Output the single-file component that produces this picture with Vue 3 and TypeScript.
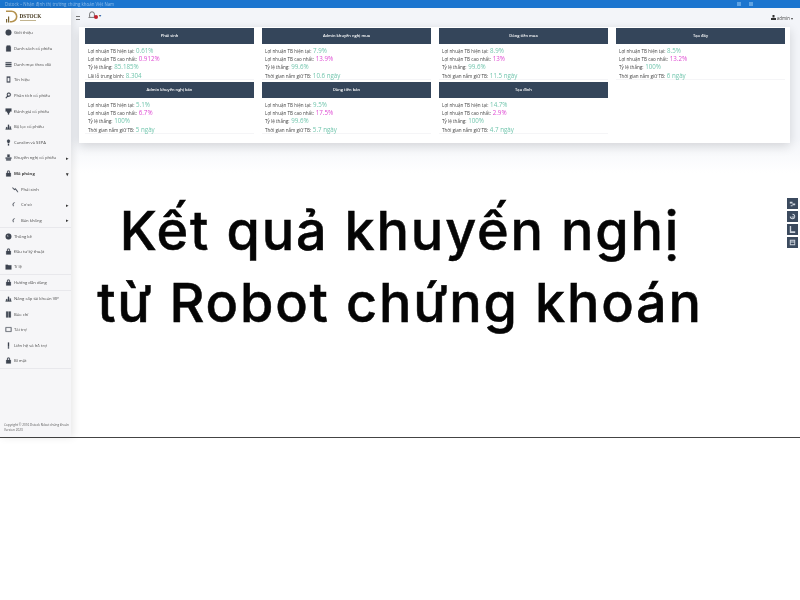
<script setup lang="ts">
interface Row { label: string; value: string; hot?: boolean }
interface Card { title: string; rows: Row[] }
const ic: Record<string, string> = {
  info: 'M6 1a5 5 0 1 0 0 10A5 5 0 0 0 6 1z',
  doc: 'M3 1h6v1.5h1V11H2V2.5h1z',
  list: 'M1 2h10v2H1zM1 5h10v2H1zM1 8h10v2H1z',
  clip: 'M3 1h6v10H3zM4.2 3v6.5h3.6V3z',
  search: 'M6.5 1a3.5 3.5 0 1 1 0 7 3.5 3.5 0 0 1 0-7zM6.5 2.5a2 2 0 1 0 0 4 2 2 0 0 0 0-4zM3.5 7l1.2 1.2L2 11 1 10z',
  rate: 'M1 1h10v5H8.5v2H7v3H5V8H3.5V6H1z',
  chart: 'M1 10h10v1H1zM2 7h2v3H2zM5 3h2v7H5zM8 6h2v4H8z',
  bulb: 'M6 1a2.6 2.6 0 0 1 1.6 4.6V7H4.4V5.6A2.6 2.6 0 0 1 6 1zM5 8h2v3H5z',
  user: 'M4 1h4v4H4zM1 6h10v2H1zM2 9h8v2H2z',
  lock: 'M3.5 5V3.5a2.5 2.5 0 0 1 5 0V5H10v6H2V5zM4.8 5h2.4V3.5a1.2 1.2 0 0 0-2.4 0z',
  globe: 'M6 1a5 5 0 1 0 0 10A5 5 0 0 0 6 1zM3 3l3 2-1 2z',
  folder: 'M1 3h4l1 1h5v7H1z',
  book: 'M2 1h3v10H2zM6 1h4v10H6z',
  card: 'M1 2h10v8H1zM2 3v6h8V3z',
  alert: 'M5 1h2v7H5zM5 9h2v2H5z',
  trend: 'M1 2l3 3 2-1 4 5v2L6 6 4 7 1 4z',
  arc: 'M2 9a5 5 0 0 1 2-7l.6.8A4 4 0 0 0 3 8.5z',
}
const menu = [
  { t: 'Giới thiệu', i: 'info' }, { t: 'Danh sách cổ phiếu', i: 'doc' },
  { t: 'Danh mục theo dõi', i: 'list' }, { t: 'Tín hiệu', i: 'clip' },
  { t: 'Phân tích cổ phiếu', i: 'search' }, { t: 'Đánh giá cổ phiếu', i: 'rate' },
  { t: 'Bộ lọc cổ phiếu', i: 'chart' }, { t: 'Canslim và SEPA', i: 'bulb' },
  { t: 'Khuyến nghị cổ phiếu', i: 'user', arrow: '▸' }, { t: 'Mô phỏng', i: 'lock', arrow: '▾', bold: true },
  { t: 'Phái sinh', i: 'trend', sub: true }, { t: 'Cơ sở', i: 'arc', sub: true, arrow: '▸' },
  { t: 'Bán khống', i: 'arc', sub: true, arrow: '▸', line: true }, { t: 'Thống kê', i: 'globe' },
  { t: 'Đầu tư kỹ thuật', i: 'lock' }, { t: 'Tỉ lệ', i: 'folder', line: true },
  { t: 'Hướng dẫn dùng', i: 'lock', line: true }, { t: 'Nâng cấp tài khoản VIP', i: 'chart' },
  { t: 'Báo chí', i: 'book' }, { t: 'Tài trợ', i: 'card' },
  { t: 'Liên hệ và hỗ trợ', i: 'alert' }, { t: 'Bí mật', i: 'lock', line: true },
]
function mk(title: string, a: string, b: string, c: string, d: string, last = 'Thời gian nắm giữ TB:'): Card {
  return { title, rows: [
    { label: 'Lợi nhuận TB hiện tại:', value: a },
    { label: 'Lợi nhuận TB cao nhất:', value: b, hot: true },
    { label: 'Tỷ lệ thắng:', value: c },
    { label: last, value: d },
  ] }
}
const columns: Card[][] = [
  [mk('Phái sinh', '0.61%', '0.912%', '85.185%', '8.304', 'Lãi lỗ trung bình:'), mk('Admin khuyến nghị bán', '5.1%', '6.7%', '100%', '5 ngày')],
  [mk('Admin khuyến nghị mua', '7.9%', '13.9%', '99.6%', '10.6 ngày'), mk('Dòng tiền bán', '9.5%', '17.5%', '99.6%', '5.7 ngày')],
  [mk('Dòng tiền mua', '8.9%', '13%', '99.6%', '11.5 ngày'), mk('Tạo đỉnh', '14.7%', '2.9%', '100%', '4.7 ngày')],
  [mk('Tạo đáy', '8.5%', '13.2%', '100%', '6 ngày')],
]
const floatIcons = [
  'M2 3h3v2H2zM5 5h3v2H5zM3 7h2v1H3z',
  'M5 2a3 3 0 1 1-3 3h1a2 2 0 1 0 2-2zM4 5h3v1H4z',
  'M2 1h1.5v6H8v2H2z',
  'M2 2h6v6H2zM3 3v1h4V3zM3 5v2h4V5z',
]
</script>

<template>
  <div class="page">
    <div class="shot">
      <div class="topbar">
        <span class="toptext">Dstock – Nhận định thị trường chứng khoán Việt Nam</span>
        <span class="topdots"><i></i><i></i></span>
      </div>
      <div class="body">
        <aside class="side">
          <div class="logo">
            <svg width="13" height="13" viewBox="0 0 13 13"><path d="M1 .5h5.5a6 6 0 0 1 0 12H4.8v-1.6h1.7a4.4 4.4 0 0 0 0-8.8H1z" fill="#b4924f"/><path d="M1 9h1.2v3.5H1zM3 6.5h1.2v6H3z" fill="#7a6434"/></svg>
            <div class="brand"><b>DSTOCK</b><i></i></div>
          </div>
          <nav class="menu">
            <div v-for="m in menu" :key="m.t" class="item" :class="{ sub: m.sub, line: m.line, bold: m.bold }">
              <svg class="ico" viewBox="0 0 12 12"><path :d="ic[m.i]" fill="#3d4450" fill-rule="evenodd" stroke="#3d4450" stroke-width="0.3"/></svg>
              <span class="lbl">{{ m.t }}</span>
              <span v-if="m.arrow" class="arrow">{{ m.arrow }}</span>
            </div>
          </nav>
          <div class="copy">Copyright © 2016 Dstock Robot chứng khoán<br>Version 2023</div>
        </aside>
        <main class="main">
          <header class="head">
            <div class="bell">
              <svg width="8" height="8" viewBox="0 0 10 10"><path d="M5 1a3 3 0 0 1 3 3v3l1 1H1l1-1V4a3 3 0 0 1 3-3z" fill="none" stroke="#555" stroke-width="1"/></svg>
              <i class="dot"></i><span class="caret">▾</span>
            </div>
            <div class="burger"></div>
            <div class="account"><svg width="5" height="5" viewBox="0 0 10 10"><path d="M3 0h4v5H3zM0 6h10v4H0z" fill="#333"/></svg> admin ▾</div>
          </header>
          <section class="panel">
            <div v-for="(col, i) in columns" :key="i" class="col">
              <article v-for="c in col" :key="c.title" class="card">
                <h3>{{ c.title }}</h3>
                <div class="rows">
                  <p v-for="r in c.rows" :key="r.label">{{ r.label }} <span :class="r.hot ? 'hot' : 'ok'">{{ r.value }}</span></p>
                </div>
              </article>
            </div>
          </section>
        </main>
      </div>
    </div>
    <div class="floats">
      <span v-for="d in floatIcons" :key="d" class="fbtn"><svg width="9" height="9" viewBox="0 0 10 10"><path :d="d" fill="#cfd5de" fill-rule="evenodd"/></svg></span>
    </div>
    <h1 class="title">Kết quả khuyến nghị<br>từ Robot chứng khoán</h1>
  </div>
</template>

<style>
html, body { background: #fff; }
</style>
<style scoped>
.page { position: relative; width: 800px; height: 600px; overflow: hidden; background: #fff; font-family: "Open Sans", "Noto Sans", sans-serif; }
.shot { height: 438px; display: flex; flex-direction: column; border-bottom: 1px solid #444; box-sizing: border-box; }
.topbar { height: 8px; background: #1b75cf; flex: none; padding: 0 47px 0 5px; overflow: hidden; display: flex; justify-content: space-between; align-items: center; }
.toptext { font-size: 4.4px; line-height: 8px; color: #8fbdea; filter: blur(.35px); }
.topdots { display: flex; gap: 8px; }
.topdots i { width: 4px; height: 4px; background: #5fa3e3; filter: blur(.5px); }
.body { flex: 1; display: flex; min-height: 0; }
.side { width: 71px; flex: none; background: #f6f6f8; box-shadow: 2px 0 8px rgba(0,0,0,.1); display: flex; flex-direction: column; z-index: 1; }
.logo { height: 17px; display: flex; align-items: center; gap: 1.5px; padding-left: 5px; background: #fff; filter: blur(.25px); }
.brand { display: flex; flex-direction: column; }
.brand b { font-size: 5.2px; line-height: 7px; color: #3f3218; font-family: "Liberation Serif", serif; letter-spacing: 0; }
.brand i { height: 1px; width: 16px; background: #c2b48f; }
.menu { flex: 1; }
.item { height: 15.65px; box-sizing: border-box; display: flex; align-items: center; padding-left: 5px; font-size: 4.2px; color: #4a4a4a; filter: blur(.3px); }
.item.line { border-bottom: 1px solid #e8e8ec; }
.item.sub { padding-left: 12px; }
.item.bold { font-weight: 700; color: #444; }
.ico { width: 7px; height: 7px; flex: none; margin-right: 2px; }
.lbl { flex: 1; white-space: nowrap; overflow: hidden; }
.arrow { font-size: 4.5px; margin-right: 2px; color: #333; }
.copy { font-size: 3.1px; line-height: 5px; color: #555; padding: 0 4px 4px; white-space: nowrap; filter: blur(.25px); }
.main { flex: 1; min-width: 0; padding: 0 10px 0 8px; background: linear-gradient(#f3f5f9 0, #f3f5f9 130px, #fff 165px); background-color: #fff; }
.head { height: 19px; position: relative; display: flex; align-items: center; justify-content: flex-end; }
.bell { position: absolute; left: 9px; top: 3px; display: flex; align-items: center; }
.dot { width: 4px; height: 4px; border-radius: 50%; background: #c21f2c; margin-left: -2px; margin-top: 4px; }
.caret { font-size: 4px; color: #444; margin-left: 1px; }
.burger { position: absolute; left: -3px; top: 8px; width: 4px; height: 2.4px; border-top: 1px solid #777; border-bottom: 1px solid #777; }
.account { font-size: 4.4px; color: #444; display: flex; align-items: center; gap: 1px; margin-right: -3px; filter: blur(.3px); }
.panel { background: #fff; height: 116px; display: grid; grid-template-columns: repeat(4, 169px); column-gap: 8px; padding: 1px 6px 0; box-sizing: border-box; box-shadow: 0 3px 10px rgba(0,0,0,.14); }
.card { height: 54px; }
.card h3 { margin: 0; height: 16px; background: #34455a; color: #fff; font-size: 4px; font-weight: 600; line-height: 16px; text-align: center; filter: blur(.25px); }
.rows { padding: 2.5px 3px 0; height: 35.5px; box-sizing: border-box; border-bottom: 1px solid #f5f5f7; filter: blur(.3px); }
.rows p { margin: 0; height: 8.4px; line-height: 8.4px; font-size: 4.6px; color: #444; white-space: nowrap; }
.ok { font-size: 6.2px; color: #73c6ae; margin-left: .5px; }
.hot { font-size: 6.2px; color: #df4bd3; margin-left: .5px; }
.floats { position: absolute; right: 2px; top: 198px; display: flex; flex-direction: column; gap: 2.5px; }
.fbtn { width: 11px; height: 10.5px; background: #3b4a5e; display: flex; align-items: center; justify-content: center; }
.title { position: absolute; left: 0; right: 0; top: 195px; margin: 0; text-align: center; font-family: Inter, sans-serif; font-weight: 500; font-size: 54px; letter-spacing: 1.8px; line-height: 72px; color: #050505; -webkit-text-stroke: .5px #050505; }
</style>
